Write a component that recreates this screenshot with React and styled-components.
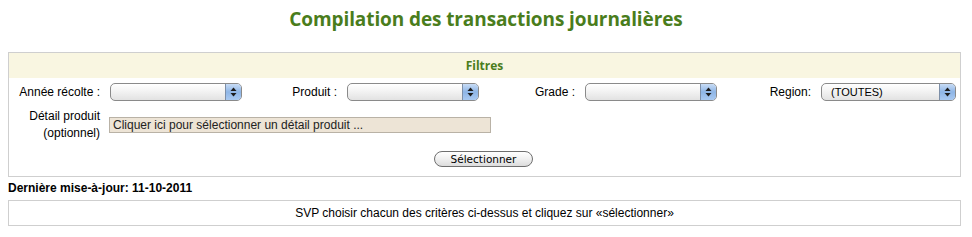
import React from 'react';
import styled, { createGlobalStyle } from 'styled-components';

const GlobalStyle = createGlobalStyle`
    body {
        margin: 8px;
        background: #ffffff;
        font-family: "Liberation Sans", Arial, sans-serif;
        font-size: 12px;
        color: #000;
    }
`;

const Title = styled.h1`
    margin: 0;
    height: 44px;
    text-align: center;
    font-family: "Open Sans", "DejaVu Sans", sans-serif;
    font-size: 19px;
    font-weight: 700;
    line-height: 22px;
    color: #4a7d1c;
    letter-spacing: -0.1px;
`;

const Panel = styled.div`
    border: 1px solid #cfcfcf;
    width: 951px;
`;

const PanelHeader = styled.div`
    height: 25px;
    background: #f9f6e1;
    text-align: center;
    font-family: "Open Sans", "DejaVu Sans", sans-serif;
    font-weight: 700;
    font-size: 12px;
    line-height: 25px;
    color: #4a7d1c;
`;

const FilterRow = styled.div`
    display: grid;
    grid-template-columns: 233px 237px 238px 239px;
    padding-top: 5px;
    height: 18px;
`;

const Field = styled.div`
    display: flex;
    align-items: center;
    justify-content: flex-end;
    gap: 10px;
`;

const Label = styled.span`
    white-space: nowrap;
`;

const Select = styled.div`
    position: relative;
    box-sizing: border-box;
    width: ${p => p.$width || 132}px;
    height: 18px;
    border: 1px solid #8a8a8a;
    border-radius: 5px;
    background: linear-gradient(#ffffff, #f3f3f3 45%, #e2e2e2);
    display: flex;
    align-items: center;
    padding-left: 9px;
    font-size: 11px;
    overflow: hidden;
`;

const Arrow = styled.span`
    position: absolute;
    top: 0;
    right: 0;
    width: 15px;
    height: 16px;
    border-left: 1px solid #7d8fa8;
    background: linear-gradient(#c8dcf5, #8eb5e6 50%, #a9c9f1);
    display: flex;
    align-items: center;
    justify-content: center;
`;

const DetailRow = styled.div`
    display: flex;
    align-items: center;
    gap: 9px;
    padding-top: 7px;
`;

const DetailLabel = styled.div`
    width: 91px;
    text-align: right;
    line-height: 17px;
`;

const DetailInput = styled.div`
    box-sizing: border-box;
    width: 382px;
    height: 16px;
    border: 1px solid #b9b2a6;
    background: #ede4d6;
    line-height: 14px;
    padding-left: 3px;
    color: #222;
`;

const ButtonRow = styled.div`
    display: flex;
    justify-content: center;
    padding: 9px 0;
`;

const PillButton = styled.button`
    box-sizing: border-box;
    width: 99px;
    height: 16px;
    margin-left: -2px;
    border: 1px solid #6f6f6f;
    border-radius: 8px;
    background: linear-gradient(#ffffff, #f0f0f0 50%, #dcdcdc);
    font-family: "DejaVu Sans", sans-serif;
    font-size: 10.5px;
    line-height: 12px;
    padding: 0;
    color: #000;
`;

const Updated = styled.div`
    font-weight: 700;
    height: 23px;
    line-height: 22px;
`;

const Message = styled.div`
    border: 1px solid #cfcfcf;
    width: 951px;
    height: 24px;
    line-height: 24px;
    text-align: center;
`;

function ArrowIcon() {
    return (
        <svg width="7" height="10" viewBox="0 0 7 10">
            <path d="M3.5 0.5 L6.5 4 L0.5 4 Z" fill="#1c1c1c" />
            <path d="M3.5 9.5 L6.5 6 L0.5 6 Z" fill="#1c1c1c" />
        </svg>
    );
}

function FakeSelect({ value, width }) {
    return (
        <Select $width={width}>
            {value}
            <Arrow><ArrowIcon /></Arrow>
        </Select>
    );
}

const filters = [
    { label: 'Année récolte :', value: '' },
    { label: 'Produit :', value: '' },
    { label: 'Grade :', value: '' },
    { label: 'Region:', value: '(TOUTES)', width: 135 },
];

export default function App() {
    return (
        <>
            <GlobalStyle />
            <Title>Compilation des transactions journalières</Title>
            <Panel>
                <PanelHeader>Filtres</PanelHeader>
                <FilterRow>
                    {filters.map(f => (
                        <Field key={f.label}>
                            <Label>{f.label}</Label>
                            <FakeSelect value={f.value} width={f.width} />
                        </Field>
                    ))}
                </FilterRow>
                <DetailRow>
                    <DetailLabel>Détail produit<br />(optionnel)</DetailLabel>
                    <DetailInput>Cliquer ici pour sélectionner un détail produit ...</DetailInput>
                </DetailRow>
                <ButtonRow>
                    <PillButton>Sélectionner</PillButton>
                </ButtonRow>
            </Panel>
            <Updated>Dernière mise-à-jour: 11-10-2011</Updated>
            <Message>SVP choisir chacun des critères ci-dessus et cliquez sur «sélectionner»</Message>
        </>
    );
}
